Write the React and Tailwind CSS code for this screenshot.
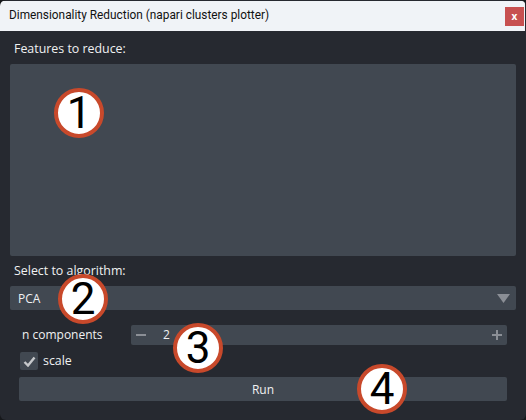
const Badge = ({ n, className }) => (
  <div
    className={`absolute w-[50px] h-[50px] rounded-full bg-white border-[4px] border-[#c8492b] flex items-center justify-center text-black text-[44px] leading-none font-['Roboto',sans-serif] ${className}`}
  >
    {n}
  </div>
)

const App = () => {
  return (
    <div className="w-[526px] h-[420px] bg-[#16181b]">
      <div className="relative w-[526px] h-[420px] overflow-hidden rounded-[6px] bg-[#262930] text-[12px] text-[#f0f1f2] font-['Open_Sans',sans-serif]">
        <div className="mt-px h-[30px] mr-px flex items-center justify-between bg-[#f0f3f7] pl-[9px] pr-[1px] text-[#111] rounded-t-[3px]">
          <span className="text-[11.85px] font-['Roboto',sans-serif]">Dimensionality Reduction (napari clusters plotter)</span>
          <div className="w-[19px] h-[19px] bg-[#c75050] text-white flex items-center justify-center text-[10px] font-bold leading-none">x</div>
        </div>

        <div className="flex flex-col pl-[10px] pr-[10px]">
          <div className="h-[33px] pl-[4px] flex items-center leading-none pt-[4px] text-[12.4px]">Features to reduce:</div>
          <div className="h-[192px] rounded-[2px] bg-[#414851]"></div>

          <div className="h-[30px] pl-[4px] flex items-center leading-none text-[12.4px]">Select to algorithm:</div>
          <div className="h-[24px] rounded-[2px] bg-[#414851] flex items-center justify-between pl-[8px] pr-[6px]">
            <span className="pt-px">PCA</span>
            <svg width="13" height="9" viewBox="0 0 13 9" className="mt-px">
              <path d="M0 0h13L6.5 9z" fill="#8b8f96" />
            </svg>
          </div>

          <div className="mt-[15px] pl-[9px] pr-[9px] flex flex-col">
            <div className="flex items-center h-[20px]">
              <span className="w-[112px] pl-[3px]">n components</span>
              <div className="flex-1 h-[20px] rounded-[2px] bg-[#414851] flex items-center justify-between pl-[5px] pr-[5px]">
                <div className="flex items-center">
                  <div className="w-[10px] h-[2px] bg-[#8b8f96]"></div>
                  <span className="ml-[17px]">2</span>
                </div>
                <svg width="10" height="10" viewBox="0 0 10 10">
                  <path d="M4 0h2v4h4v2H6v4H4V6H0V4h4z" fill="#8b8f96" />
                </svg>
              </div>
            </div>
            <div className="mt-[7px] flex items-center h-[18px] pl-px">
              <div className="w-[18px] h-[18px] rounded-[2px] bg-[#414851] flex items-center justify-center">
                <svg width="13" height="11" viewBox="0 0 13 11">
                  <path d="M1.5 6l3.5 3.5L11.5 1.5" fill="none" stroke="#c6c8cb" strokeWidth="2.4" />
                </svg>
              </div>
              <span className="ml-[5px] text-[12.4px]">scale</span>
            </div>
            <div className="mt-[7px] h-[24px] pt-px rounded-[2px] bg-[#414851] flex items-center justify-center">Run</div>
          </div>
        </div>

        <Badge n="1" className="left-[54px] top-[88px]" />
        <Badge n="2" className="left-[58px] top-[274px]" />
        <Badge n="3" className="left-[173px] top-[323px]" />
        <Badge n="4" className="left-[357px] top-[364px]" />
      </div>
    </div>
  )
}

export default App
